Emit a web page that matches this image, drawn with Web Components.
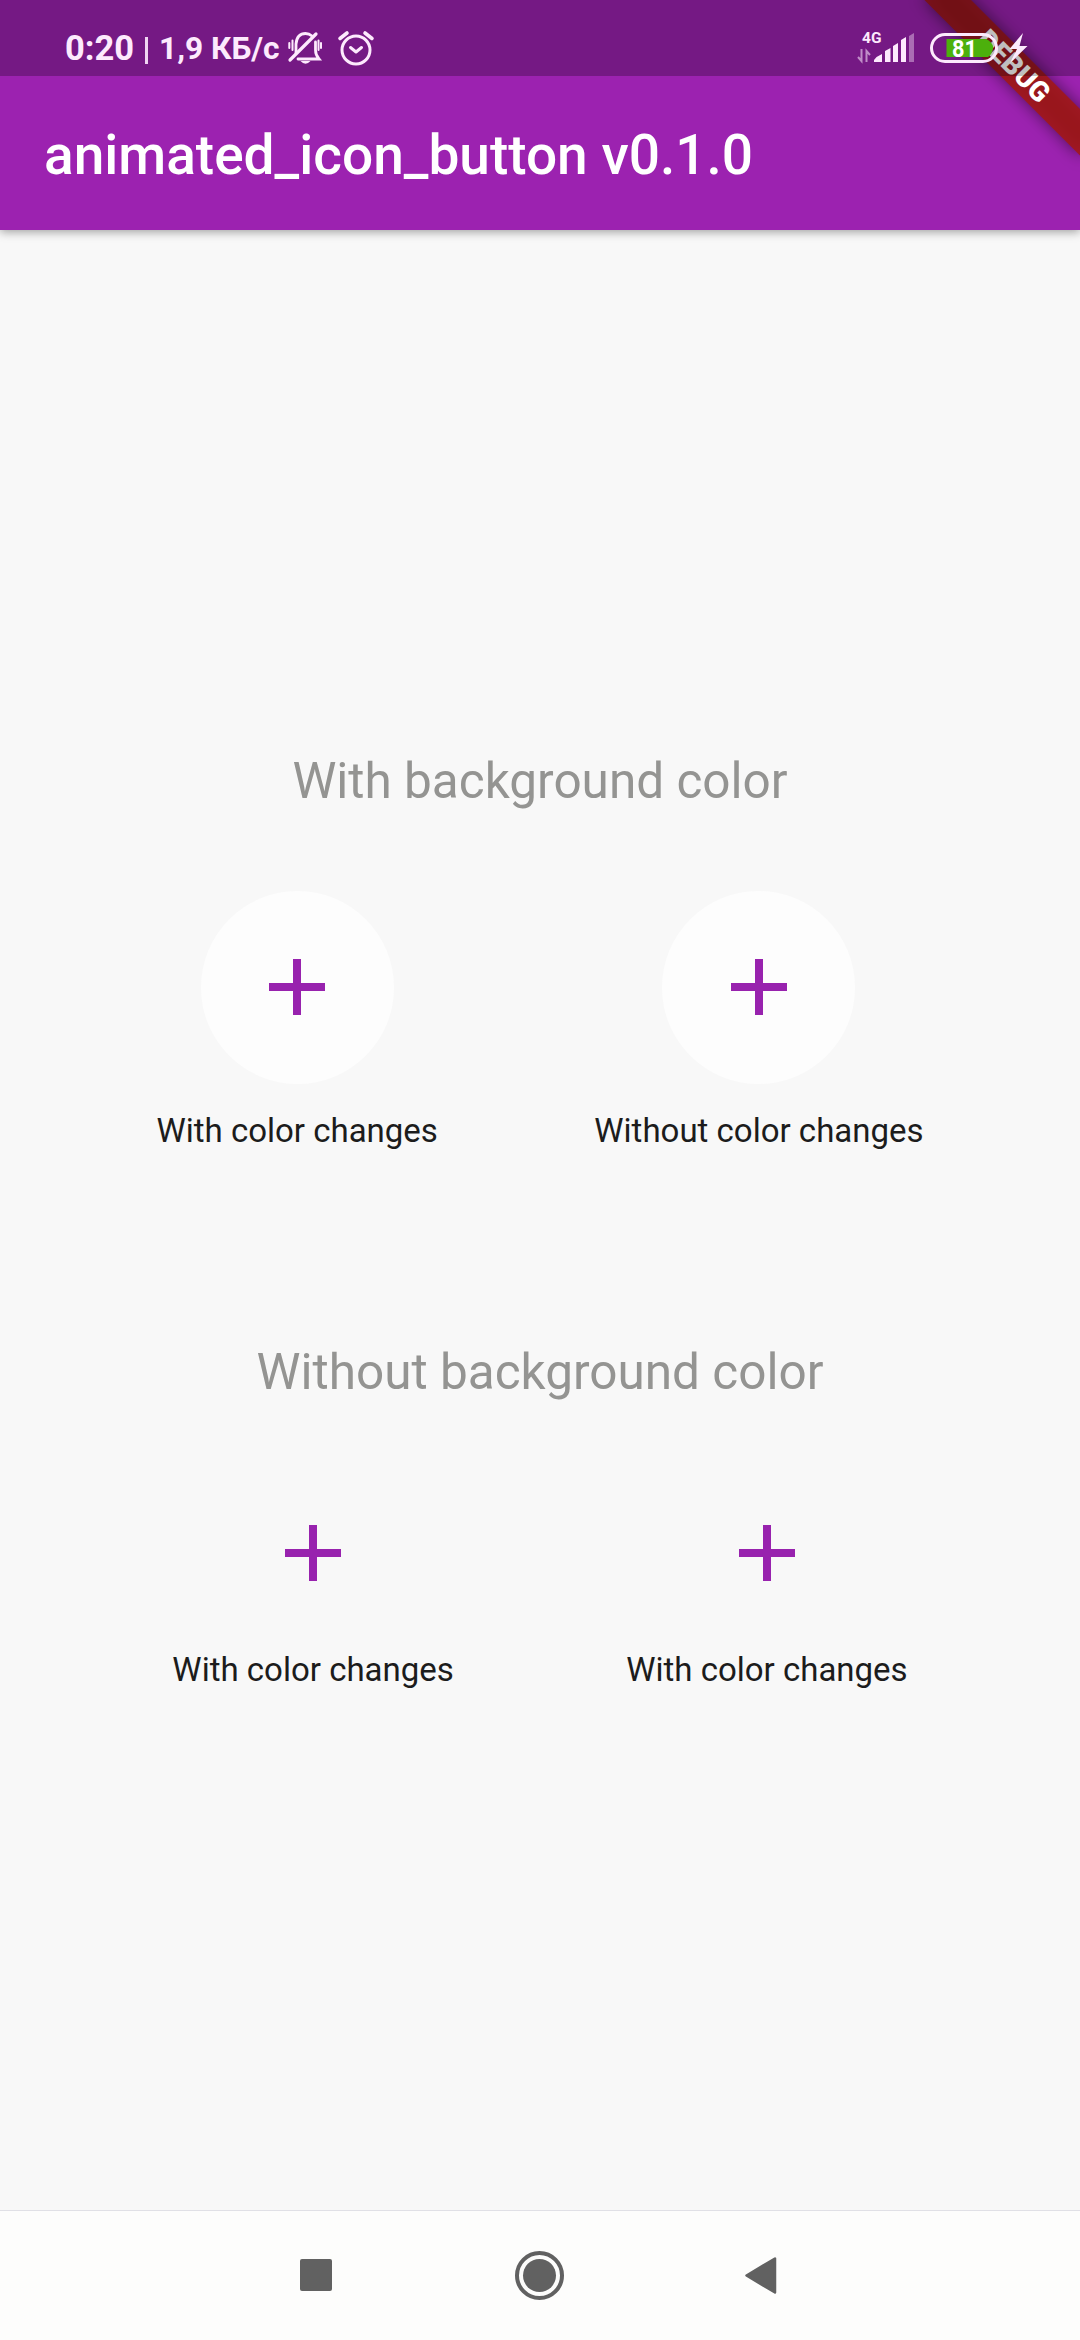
<!DOCTYPE html>
<html lang="en">
<head>
<meta charset="utf-8">
<title>animated_icon_button</title>
<style>
html,body{margin:0;padding:0}
body{width:1080px;height:2340px;overflow:hidden;font-family:Roboto,"Noto Sans",sans-serif}
</style>
</head>
<body>
<demo-app></demo-app>
<script>
const define = (name, markup) => customElements.define(name, class extends HTMLElement {
  constructor() {
    super();
    this.attachShadow({mode: 'open'}).innerHTML = markup;
  }
});

define('status-bar', `
<style>
:host{display:flex;box-sizing:border-box;height:76px;padding:0 50px 0 65px;background:rgba(0,0,0,.25);color:#fdeafd;justify-content:space-between}
.left,.right{display:flex;align-items:flex-start}
.t{width:68px;font-size:34.5px;line-height:40px;font-weight:700;margin-top:28px;white-space:pre}
.s{width:127px;font-size:31.7px;line-height:40px;font-weight:700;white-space:pre;margin-top:29px}
.bar{width:3px;height:27px;background:#f0d5f3;margin:37px 11px 0 12px}
svg{display:block;flex:none}
</style>
<div class="left">
  <span class="t">0:20</span><span class="bar"></span><span class="s">1,9 КБ/с</span>
  <svg width="38" height="76" viewBox="286 0 38 76" fill="none" stroke="#fdeafd" stroke-width="2.8" stroke-linecap="round">
    <path d="M296 53V44Q297 33.500 305.500 33.500Q309 33.500 312 36M315.500 42V50Q315.500 55 319 59H298"/>
    <path d="M316 34L290 60" stroke-width="3.200"/>
    <path d="M289.300 43V48M292.500 40.500V50M321 43V48M318.500 40.500V50" stroke-width="2"/>
    <path d="M300.500 61Q305.500 66.500 310.500 61Z" fill="#fdeafd" stroke="none"/>
  </svg>
  <svg width="38" height="76" viewBox="337 0 38 76" style="margin-left:13px" fill="none" stroke="#fdeafd" stroke-width="3" stroke-linecap="round" stroke-linejoin="round">
    <circle cx="356" cy="50" r="14"/>
    <path d="M350.500 47.500L356 52L361.500 47.500"/>
    <path d="M340 38.500L347 33M372 38.500L365 33" stroke-width="3.600"/>
  </svg>
</div>
<div class="right">
  <svg width="177" height="76" viewBox="852 0 177 76">
    <g fill="#fdeafd">
      <text x="861" y="43" font-family="Roboto,sans-serif" font-size="15.500" font-weight="700">4G</text>
      <path d="M873 62V60Q876 56 881 54V62ZM884 62V51L889.500 48V62ZM892 62V46L897 43V62ZM900 62V40L905 37V62Z"/>
      <path d="M908 62V36L913 33V62Z" opacity=".4"/>
    </g>
    <path d="M860.500 49V61L857 57M865.500 62V51L869 55" fill="none" stroke="#dab5df" stroke-width="2" opacity=".75"/>
    <path d="M945.500 39H985Q990 41 992 46V49Q991 54 987 57H945.500Z" fill="#4cb00c"/>
    <rect x="930.500" y="34.500" width="65" height="27" rx="13.500" fill="none" stroke="#fdeafd" stroke-width="3"/>
    <text x="951" y="56.500" font-family="Roboto,sans-serif" font-size="24" font-weight="700" fill="#fff" textLength="25" lengthAdjust="spacingAndGlyphs">81</text>
    <path d="M1022 33L1008.500 49H1016L1009 63L1026.500 46H1018.500Z" fill="#fdeafd"/>
  </svg>
</div>`);

define('title-bar', `
<style>
:host{display:flex;align-items:center;box-sizing:border-box;height:154px;padding:3px 0 0 44px;color:#fff;font-size:55px;line-height:64px;font-weight:500;white-space:nowrap}
</style><slot></slot>`);

define('debug-banner', `
<style>
:host{position:absolute;top:0;right:0;width:200px;height:200px;overflow:hidden;pointer-events:none}
div{position:absolute;width:220px;height:33px;left:156px;top:77px;margin-left:-66px;transform-origin:110px -77px;transform:rotate(45deg);
background:rgba(166,24,18,.85);text-align:center;color:#fff;font-size:28px;line-height:33px;font-weight:900}
div.shade{background:rgba(0,0,0,.5);filter:blur(8px)}
</style><div class="shade"></div><div>DEBUG</div>`);

define('section-title', `
<style>:host{display:block;text-align:center;color:#949492;font-size:49.5px;line-height:58px}</style><slot></slot>`);

define('button-row', `
<style>:host{display:flex;justify-content:space-evenly}</style><slot></slot>`);

define('icon-choice', `
<style>
:host{display:flex;flex-direction:column;align-items:center;color:#1c1c1c;font-size:33px;line-height:39px;white-space:nowrap}
.disc{width:193px;height:193px;display:flex;align-items:center;justify-content:center;border-radius:50%;margin-bottom:27px}
:host([filled]) .disc{background:#fdfdfd}
:host(:not([filled])) .disc{height:96px;margin-bottom:49px}
svg{display:block}
</style>
<div class="disc"><svg width="96" height="96" viewBox="0 0 24 24"><path fill="#9822ae" d="M19 13h-6v6h-2v-6H5v-2h6V5h2v6h6v2z"/></svg></div>
<span><slot></slot></span>`);

define('nav-bar', `
<style>
:host{display:block;box-sizing:border-box;height:130px;background:#fdfdfc;border-top:1px solid #e0e0e6}
svg{display:block}
</style>
<svg width="1080" height="129" viewBox="0 2211 1080 129" fill="#616161">
  <rect x="300" y="2259" width="32" height="32" rx="2"/>
  <circle cx="539.500" cy="2275.500" r="16.500"/>
  <circle cx="539.500" cy="2275.500" r="22.500" fill="none" stroke="#616161" stroke-width="4"/>
  <path d="M746.500 2275.500L775 2258.500V2292.500Z" stroke="#616161" stroke-width="2.500" stroke-linejoin="round"/>
</svg>`);

define('demo-app', `
<style>
:host{display:flex;flex-direction:column;position:relative;width:1080px;height:2340px;overflow:hidden;background:#f8f8f8}
header{display:flex;flex-direction:column;flex:none;background:#9c22b0;box-shadow:0 2px 9px rgba(0,0,0,.36)}
status-bar{position:relative;z-index:2}
debug-banner{z-index:1}
main{flex:1;display:flex;flex-direction:column;justify-content:center}
.one{padding-top:81px;padding-bottom:193px}
.two{padding-top:104px}
</style>
<header><status-bar></status-bar><title-bar>animated_icon_button v0.1.0</title-bar></header>
<main>
  <section-title>With background color</section-title>
  <button-row class="one">
    <icon-choice filled>With color changes</icon-choice>
    <icon-choice filled>Without color changes</icon-choice>
  </button-row>
  <section-title>Without background color</section-title>
  <button-row class="two">
    <icon-choice>With color changes</icon-choice>
    <icon-choice>With color changes</icon-choice>
  </button-row>
</main>
<nav-bar></nav-bar>
<debug-banner></debug-banner>`);
</script>
</body>
</html>
